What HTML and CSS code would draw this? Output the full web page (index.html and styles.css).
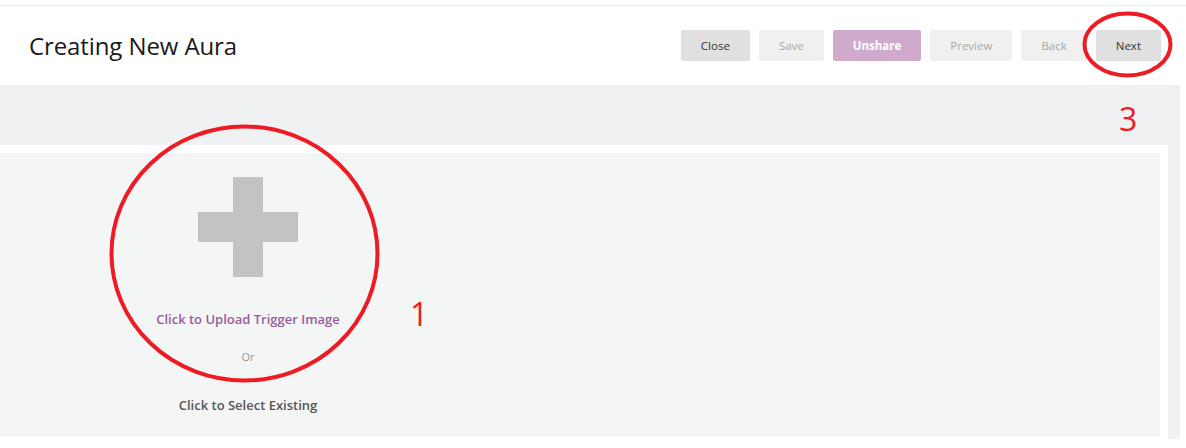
FILE: index.html
```html
<!DOCTYPE html>
<html lang="en">
<head>
  <meta charset="UTF-8">
  <title>Creating New Aura</title>
  <link rel="stylesheet" href="styles.css">
</head>
<body>
  <div class="header">
    <h1 class="title">Creating New Aura</h1>
    <div class="actions">
      <button class="btn btn-dark">Close</button>
      <button class="btn btn-light">Save</button>
      <button class="btn btn-purple">Unshare</button>
      <button class="btn btn-light">Preview</button>
      <button class="btn btn-light">Back</button>
      <button class="btn btn-dark">Next</button>
    </div>
  </div>

  <div class="main">
    <div class="panel">
      <div class="panel-inner">
        <div class="upload">
          <svg class="plus" width="100" height="100" viewBox="0 0 100 100">
            <rect x="35" y="0" width="30" height="100" fill="#c1c3c4"/>
            <rect x="0" y="35" width="100" height="30" fill="#c1c3c4"/>
          </svg>
          <div class="upload-link">Click to Upload Trigger Image</div>
          <div class="or">Or</div>
          <div class="select-link">Click to Select Existing</div>
        </div>
      </div>
    </div>
  </div>

  <!-- red annotation marks drawn over the screenshot -->
  <svg class="marks" width="1186" height="448" viewBox="0 0 1186 448">
    <ellipse cx="244.5" cy="253.5" rx="133" ry="127" fill="none" stroke="#ed1c24" stroke-width="4"/>
    <ellipse cx="1127.5" cy="44.5" rx="43" ry="31" fill="none" stroke="#ed1c24" stroke-width="4"/>
  </svg>
  <span class="mark-num num-1">1</span>
  <span class="mark-num num-3">3</span>
</body>
</html>
```

FILE: styles.css
```css
* {
  box-sizing: border-box;
}

body {
  margin: 0;
  padding-top: 5px;
  font-family: 'Open Sans', sans-serif;
  background: #fff;
  width: 1186px;
  height: 448px;
  overflow: hidden;
  position: relative;
}

.header {
  height: 80px;
  border-top: 1px solid #eeeff1;
  display: flex;
  align-items: center;
  justify-content: space-between;
  padding: 0 25px 0 29px;
}

.title {
  margin: 0;
  font-size: 24px;
  font-weight: 400;
  color: #1a1a1a;
  letter-spacing: -0.1px;
}

.actions {
  display: flex;
  gap: 9px;
}

.btn {
  height: 31px;
  padding: 0 20px;
  border: none;
  border-radius: 2px;
  font-family: 'Open Sans', sans-serif;
  font-size: 11.5px;
  cursor: pointer;
}

.btn-dark {
  background: #e0e0e0;
  color: #333;
}

.btn-light {
  background: #f0f0f0;
  color: #a8a8a8;
}

.btn-purple {
  background: #d0aacd;
  color: #fff;
  font-weight: 700;
}

.main {
  width: 1180px;
  height: 354px;
  background: #f0f1f3;
  padding: 60px 12px 0 0;
}

.panel {
  background: #fff;
  padding: 8px 8px 2px 0;
  height: 294px;
}

.panel-inner {
  background: #f4f5f5;
  height: 284px;
  padding-top: 24px;
}

.upload {
  width: 496px;
  text-align: center;
}

.plus {
  display: block;
  margin: 0 auto;
}

.upload-link {
  margin-top: 33px;
  font-size: 13px;
  font-weight: 600;
  color: #9a5c9d;
}

.or {
  margin-top: 21px;
  font-size: 11px;
  color: #999;
}

.select-link {
  margin-top: 32px;
  font-size: 13px;
  font-weight: 600;
  color: #555;
}

.marks {
  position: absolute;
  top: 0;
  left: 0;
  pointer-events: none;
}

.mark-num {
  position: absolute;
  font-size: 32px;
  line-height: 1;
  color: #ed1c24;
}

.num-1 {
  left: 410px;
  top: 298px;
}

.num-3 {
  left: 1119px;
  top: 103px;
}
```
